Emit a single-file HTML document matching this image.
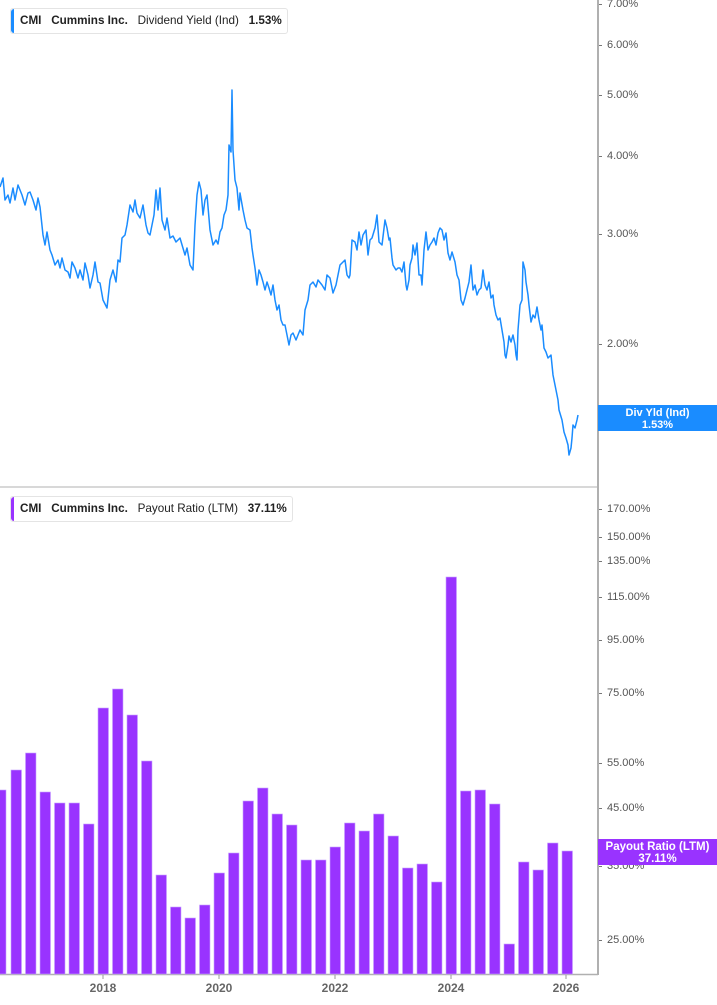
<!DOCTYPE html>
<html><head><meta charset="utf-8"><style>
body{margin:0;width:717px;height:1005px;background:#fff;overflow:hidden;font-family:"Liberation Sans",sans-serif;position:relative}
.lab{position:absolute;left:607px;font-size:11px;color:#555;line-height:12px}
.tk{position:absolute;left:599px;width:3px;height:1px;background:#777}
.leg{position:absolute;left:10px;height:24px;border:1px solid #e4e4e4;border-radius:3px;font-size:11.7px;line-height:24px;color:#222;padding-left:9px;padding-right:5px;white-space:nowrap}
.leg i{position:absolute;left:0;top:0;bottom:0;width:3px;border-radius:3px 0 0 3px}
.yr{position:absolute;top:981px;font-size:12px;font-weight:bold;color:#666;width:40px;text-align:center}
.box{position:absolute;left:598px;width:119px;color:#fff;font-weight:bold;font-size:11px;line-height:12px;text-align:center;padding-top:2px}
</style></head><body>
<svg width="717" height="1005" style="position:absolute;left:0;top:0">
<line x1="0" y1="487" x2="598" y2="487" stroke="#ccc" stroke-width="1.5"/>
<line x1="0" y1="974.5" x2="598" y2="974.5" stroke="#b0b0b0" stroke-width="1.5"/>
<line x1="598" y1="0" x2="598" y2="975" stroke="#b0b0b0" stroke-width="2"/>
<g stroke="#999"><line x1="103" y1="975" x2="103" y2="979"/><line x1="219" y1="975" x2="219" y2="979"/><line x1="335" y1="975" x2="335" y2="979"/><line x1="451" y1="975" x2="451" y2="979"/><line x1="566" y1="975" x2="566" y2="979"/></g>
<polyline fill="none" stroke="#1a8cff" stroke-width="1.5" stroke-linejoin="round" points="0,187 3,178 5,200 8,195 10,203 13,188 15,200 18,185 22,195 25,205 28,193 30,192 33,200 36,210 38,198 40,207 43,235 45,245 47,232 50,250 52,255 55,265 58,260 60,268 62,258 65,270 68,272 70,278 72,262 75,268 78,278 80,270 83,280 85,263 88,275 90,288 93,275 95,262 98,282 100,283 103,300 107,308 110,280 113,270 116,282 118,260 120,262 122,238 125,235 127,225 130,205 133,212 135,200 137,213 140,218 143,205 146,225 148,233 150,235 152,225 154,215 156,190 158,210 160,188 162,220 165,230 167,218 170,238 173,236 176,242 180,238 185,255 187,248 190,265 193,270 195,225 197,195 199,182 201,190 203,215 205,200 207,195 210,230 213,245 216,240 218,244 220,232 222,228 224,215 226,210 228,195 229,145 231,152 232,90 233,150 235,180 237,188 239,210 240,193 243,210 245,220 247,228 250,230 252,248 253,255 255,268 257,285 259,270 261,275 263,282 265,290 267,282 269,288 271,295 273,285 275,300 277,310 279,305 281,320 283,325 285,325 287,335 289,345 291,335 293,333 296,340 300,330 303,335 305,310 308,300 310,285 313,282 316,287 318,280 322,285 325,290 327,275 330,278 333,293 336,285 338,275 340,265 343,262 345,260 347,275 349,278 350,275 352,240 355,242 357,250 359,232 361,245 363,235 366,230 368,255 370,240 372,238 375,228 377,215 379,242 382,245 385,220 387,228 389,240 390,238 392,258 393,265 396,270 398,268 400,268 402,272 404,262 406,285 407,290 409,280 410,265 412,258 413,245 415,255 417,243 419,275 421,275 422,285 424,250 426,232 428,250 430,245 432,242 434,238 436,245 438,233 440,228 442,230 444,240 446,233 448,253 450,260 452,252 455,262 457,275 459,280 461,300 463,305 465,298 467,290 469,282 471,265 473,290 475,285 477,295 479,290 481,288 483,270 485,285 487,290 489,282 491,298 493,295 494,305 496,315 498,320 500,318 502,330 504,342 505,355 506,358 508,345 509,336 511,342 513,335 515,345 516,355 517,360 518,330 520,305 522,300 523,262 525,270 526,282 528,295 529,305 531,322 533,315 535,318 537,307 539,320 541,330 542,325 544,348 546,352 548,358 551,355 553,375 556,390 558,400 559,410 562,420 564,432 566,438 568,445 569,455 571,448 572,438 573,425 575,428 577,420 578,415"/>
<g fill="#9933ff" stroke="#c9a3ff" stroke-width="0.6">
<rect x="-1" y="790" width="7" height="184"/>
<rect x="11" y="770" width="10.5" height="204"/>
<rect x="25.5" y="753" width="10.5" height="221"/>
<rect x="40" y="792" width="10.5" height="182"/>
<rect x="54.5" y="803" width="10.5" height="171"/>
<rect x="69" y="803" width="10.5" height="171"/>
<rect x="83.5" y="824" width="10.5" height="150"/>
<rect x="98" y="708" width="10.5" height="266"/>
<rect x="112.5" y="689" width="10.5" height="285"/>
<rect x="127" y="715" width="10.5" height="259"/>
<rect x="141.5" y="761" width="10.5" height="213"/>
<rect x="156" y="875" width="10.5" height="99"/>
<rect x="170.5" y="907" width="10.5" height="67"/>
<rect x="185" y="918" width="10.5" height="56"/>
<rect x="199.5" y="905" width="10.5" height="69"/>
<rect x="214" y="873" width="10.5" height="101"/>
<rect x="228.5" y="853" width="10.5" height="121"/>
<rect x="243" y="801" width="10.5" height="173"/>
<rect x="257.5" y="788" width="10.5" height="186"/>
<rect x="272" y="814" width="10.5" height="160"/>
<rect x="286.5" y="825" width="10.5" height="149"/>
<rect x="301" y="860" width="10.5" height="114"/>
<rect x="315.5" y="860" width="10.5" height="114"/>
<rect x="330" y="847" width="10.5" height="127"/>
<rect x="344.5" y="823" width="10.5" height="151"/>
<rect x="359" y="831" width="10.5" height="143"/>
<rect x="373.5" y="814" width="10.5" height="160"/>
<rect x="388" y="836" width="10.5" height="138"/>
<rect x="402.5" y="868" width="10.5" height="106"/>
<rect x="417" y="864" width="10.5" height="110"/>
<rect x="431.5" y="882" width="10.5" height="92"/>
<rect x="446" y="577" width="10.5" height="397"/>
<rect x="460.5" y="791" width="10.5" height="183"/>
<rect x="475" y="790" width="10.5" height="184"/>
<rect x="489.5" y="804" width="10.5" height="170"/>
<rect x="504" y="944" width="10.5" height="30"/>
<rect x="518.5" y="862" width="10.5" height="112"/>
<rect x="533" y="870" width="10.5" height="104"/>
<rect x="547.5" y="843" width="10.5" height="131"/>
<rect x="562" y="851" width="10.5" height="123"/>
</g>
</svg>
<div class="tk" style="top:4px"></div><div class="lab" style="top:-2px">7.00%</div>
<div class="tk" style="top:45px"></div><div class="lab" style="top:39px">6.00%</div>
<div class="tk" style="top:95px"></div><div class="lab" style="top:89px">5.00%</div>
<div class="tk" style="top:156px"></div><div class="lab" style="top:150px">4.00%</div>
<div class="tk" style="top:234px"></div><div class="lab" style="top:228px">3.00%</div>
<div class="tk" style="top:344px"></div><div class="lab" style="top:338px">2.00%</div>
<div class="tk" style="top:509px"></div><div class="lab" style="top:503px">170.00%</div>
<div class="tk" style="top:537px"></div><div class="lab" style="top:531px">150.00%</div>
<div class="tk" style="top:561px"></div><div class="lab" style="top:555px">135.00%</div>
<div class="tk" style="top:597px"></div><div class="lab" style="top:591px">115.00%</div>
<div class="tk" style="top:640px"></div><div class="lab" style="top:634px">95.00%</div>
<div class="tk" style="top:693px"></div><div class="lab" style="top:687px">75.00%</div>
<div class="tk" style="top:763px"></div><div class="lab" style="top:757px">55.00%</div>
<div class="tk" style="top:808px"></div><div class="lab" style="top:802px">45.00%</div>
<div class="tk" style="top:866px"></div><div class="lab" style="top:860px">35.00%</div>
<div class="tk" style="top:940px"></div><div class="lab" style="top:934px">25.00%</div>
<div class="box" style="top:405px;height:24px;background:#1a8cff">Div Yld (Ind)<br>1.53%</div>
<div class="box" style="top:839px;height:24px;background:#9933ff;font-size:11.5px">Payout Ratio (LTM)<br>37.11%</div>
<div class="leg" style="top:8px"><i style="background:#1a8cff"></i><b>CMI</b>&nbsp;&nbsp; <b>Cummins Inc.</b>&nbsp;&nbsp; Dividend Yield (Ind)&nbsp;&nbsp; <b>1.53%</b></div>
<div class="leg" style="top:496px"><i style="background:#9933ff"></i><b>CMI</b>&nbsp;&nbsp; <b>Cummins Inc.</b>&nbsp;&nbsp; Payout Ratio (LTM)&nbsp;&nbsp; <b>37.11%</b></div>
<div class="yr" style="left:83px">2018</div>
<div class="yr" style="left:199px">2020</div>
<div class="yr" style="left:315px">2022</div>
<div class="yr" style="left:431px">2024</div>
<div class="yr" style="left:546px">2026</div>
</body></html>
